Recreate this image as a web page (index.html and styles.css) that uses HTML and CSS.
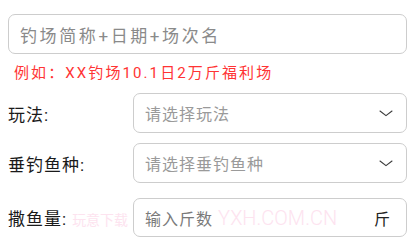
FILE: index.html
```html
<!DOCTYPE html>
<html lang="zh-CN">
<head>
<meta charset="utf-8">
<link rel="stylesheet" href="styles.css">
</head>
<body>
<div class="page">
  <div class="field field-wide">
    <span class="ph ph-title">钓场简称+日期+场次名</span>
  </div>
  <div class="hint">例如：XX钓场10.1日2万斤福利场</div>

  <div class="row row-play">
    <div class="label">玩法:</div>
    <div class="field select">
      <span class="ph">请选择玩法</span>
      <svg class="chev" width="14" height="7" viewBox="0 0 14 7"><path d="M1 1 L7 5.6 L13 1" fill="none" stroke="#3a3a3a" stroke-width="1.1" stroke-linecap="round" stroke-linejoin="round"/></svg>
    </div>
  </div>

  <div class="row row-fish">
    <div class="label">垂钓鱼种:</div>
    <div class="field select">
      <span class="ph">请选择垂钓鱼种</span>
      <svg class="chev" width="14" height="7" viewBox="0 0 14 7"><path d="M1 1 L7 5.6 L13 1" fill="none" stroke="#3a3a3a" stroke-width="1.1" stroke-linecap="round" stroke-linejoin="round"/></svg>
    </div>
  </div>

  <div class="row row-amount">
    <div class="label">撒鱼量:<span class="wm wm-cn">玩意下载</span></div>
    <div class="field input">
      <span class="ph ph-dark">输入斤数</span>
      <span class="wm wm-en">YXH.COM.CN</span>
      <span class="unit">斤</span>
    </div>
  </div>
</div>
</body>
</html>
```

FILE: styles.css
```css
* { box-sizing: border-box; }
html, body { margin: 0; padding: 0; background: #fff; }
body {
  font-family: Roboto, "Noto Sans CJK SC", sans-serif;
  width: 415px;
  height: 242px;
  overflow: hidden;
}
.page {
  padding: 14px 8px 0 8px;
}
.field {
  border: 1.5px solid #cdcdcd;
  border-radius: 7px;
  height: 40px;
  display: flex;
  align-items: center;
  background: #fff;
}
.field-wide {
  width: 399px;
  padding-left: 11px;
}
.ph {
  color: #9a9a9a;
  font-size: 16px;
  letter-spacing: 1px;
  white-space: nowrap;
}
.ph-title {
  color: #8a8a8a;
  font-size: 17px;
  letter-spacing: 2.6px;
}
.ph-dark { color: #7a7a7a; }
.hint {
  margin-top: 9px;
  height: 21px;
  line-height: 21px;
  padding-left: 6px;
  color: #ff3434;
  font-size: 15px;
  letter-spacing: 2.1px;
  white-space: nowrap;
}
.row {
  display: flex;
  align-items: center;
}
.row-play { margin-top: 9px; }
.row-fish { margin-top: 10px; }
.row-amount { margin-top: 15px; }
.row-amount .field { height: 39px; }
.label {
  width: 125px;
  flex: none;
  color: #1a1a1a;
  font-size: 17px;
  letter-spacing: 1px;
  white-space: nowrap;
}
.select, .input {
  flex: 1;
  padding-left: 11px;
}
.select {
  padding-right: 13px;
  justify-content: space-between;
}
.input { padding-right: 16px; }
.chev { display: block; margin-top: 1px; }
.unit {
  margin-left: auto;
  color: #222;
  font-size: 16px;
}
.wm {
  color: #fde3ef;
  white-space: nowrap;
}
.wm-cn {
  margin-left: 5px;
  font-size: 14px;
  letter-spacing: 0;
}
.wm-en {
  margin-left: 5px;
  font-size: 20px;
  font-weight: 300;
}
```
